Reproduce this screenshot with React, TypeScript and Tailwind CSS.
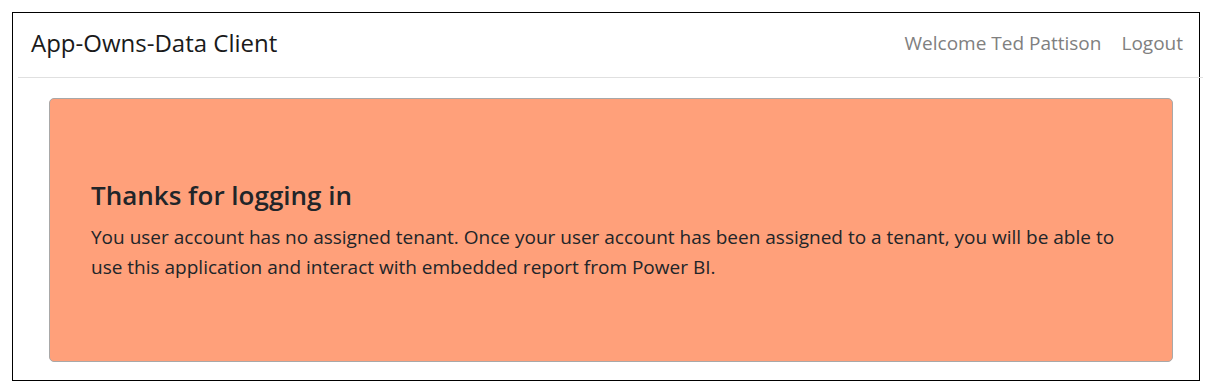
export default function App() {
  return (
    <div
      className="min-h-screen bg-white pl-[12px] pt-[12px]"
      style={{ fontFamily: '"Open Sans", "Noto Sans", Arial, sans-serif' }}
    >
      <div className="w-[1188px] h-[369px] border border-black">
        <nav className="flex items-center justify-between h-[65px] ml-[5px] w-[1185px] pl-[13px] pr-[20px] pb-[4px] border-b border-[#e0e0e0]">
          <span className="text-[24px] text-[#1a1a1a]">App-Owns-Data Client</span>
          <div className="flex items-center gap-[20px] text-[19px] text-[#808080]">
            <span>Welcome Ted Pattison</span>
            <span>Logout</span>
          </div>
        </nav>
        <div className="ml-[36px] mt-[20px] w-[1124px] h-[264px] rounded-[5px] border border-[#a8a8a8] bg-[#ffa07a] px-[41px] pt-[81px]">
          <h4 className="text-[26px] leading-[30px] font-semibold text-[#212529] mb-[12px]">
            Thanks for logging in
          </h4>
          <p className="text-[19px] leading-[30px] text-[#212529]">
            You user account has no assigned tenant. Once your user account has been assigned to a tenant, you will be able to
            use this application and interact with embedded report from Power BI.
          </p>
        </div>
      </div>
    </div>
  );
}
